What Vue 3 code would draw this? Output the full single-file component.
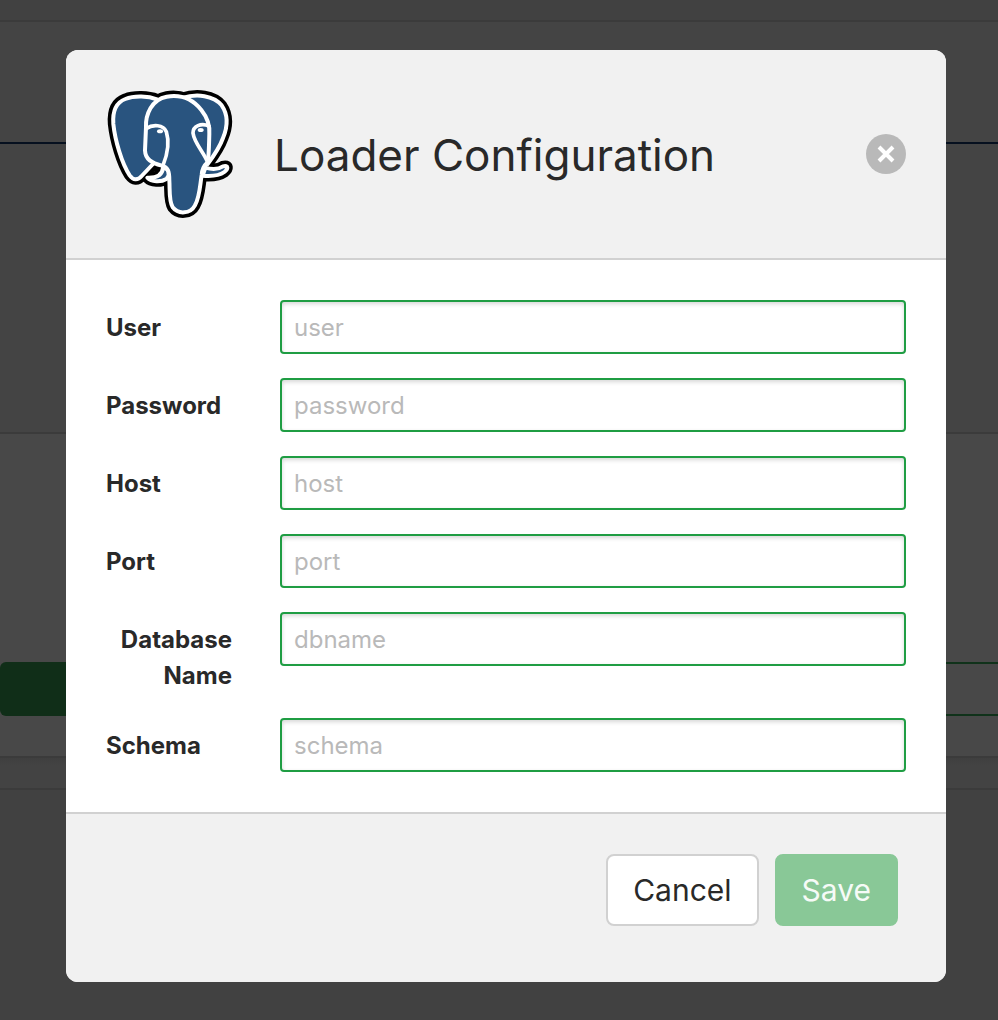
<script setup>
import { reactive } from 'vue'

const fields = [
  { id: 'user', label: 'User', type: 'text' },
  { id: 'password', label: 'Password', type: 'password' },
  { id: 'host', label: 'Host', type: 'text' },
  { id: 'port', label: 'Port', type: 'text' },
  { id: 'dbname', label: 'Database Name', type: 'text', wrap: true },
  { id: 'schema', label: 'Schema', type: 'text' },
]
const values = reactive({ user: '', password: '', host: '', port: '', dbname: '', schema: '' })
</script>

<template>
  <div class="screen">
    <div class="backdrop" aria-hidden="true">
      <div class="band topbar"></div>
      <div class="band tabs"></div>
      <div class="band content"></div>
      <div class="band panel">
        <div class="panel-action"></div>
        <div class="panel-field"></div>
      </div>
      <div class="band gap"></div>
      <div class="rest"></div>
    </div>

    <div class="overlay">
      <form class="modal" role="dialog" aria-labelledby="modal-title" @submit.prevent>
        <header class="modal-head">
          <svg class="logo" viewBox="33 30 384 384" role="img" aria-label="PostgreSQL">
            <defs>
              <g id="elephant">
                <path d="M186 58C160 48 118 46 91 57C62 68 52 92 55 132C60 180 80 250 104 286C115 301 128 302 140 288L174 252L250 190Z" />
                <path d="M262 54C305 40 356 46 380 76C402 108 396 145 384 174C373 205 356 228 338 252L290 180Z" />
                <path d="M157 293C179 294 202 288 204 263C222 262 227 286 214 297C198 307 169 306 157 293Z" />
                <path d="M331 263C352 269 372 267 384 259C401 254 400 267 388 276C370 289 346 289 323 287Z" />
                <path d="M153 142C151 104 170 58 215 50C257 43 294 58 319 90C338 114 345 137 343 162C342 193 342 224 338 247C324 259 321 270 320 285C314 324 314 352 300 376C286 402 250 404 233 382C221 362 225 330 223 301C223 276 220 261 200 257C170 249 151 238 150 211Z" />
              </g>
            </defs>
            <use href="#elephant" class="outline" />
            <use href="#elephant" class="body" />
            <path class="patch" d="M162 277Q174 258 193 264Q194 276 162 277Z" />
            <path class="line" d="M153 146C174 132 205 134 214 155C225 190 217 224 204 256" />
            <path class="line" d="M342 138C318 128 294 138 294 159C298 190 325 214 338 247" />
            <ellipse class="eye" cx="195" cy="154" rx="9" ry="6" />
            <ellipse class="eye" cx="317" cy="150" rx="9" ry="6" />
          </svg>
          <h1 id="modal-title">Loader Configuration</h1>
          <button type="button" class="close" aria-label="Close">
            <svg viewBox="0 0 40 40" aria-hidden="true">
              <path d="M13 13L27 27M27 13L13 27" />
            </svg>
          </button>
        </header>

        <div class="modal-body">
          <div v-for="f in fields" :key="f.id" class="field">
            <label :for="f.id" :class="{ wrap: f.wrap }">{{ f.label }}</label>
            <input :id="f.id" v-model="values[f.id]" :type="f.type" :placeholder="f.id" />
          </div>
        </div>

        <footer class="modal-foot">
          <button type="button" class="btn cancel">Cancel</button>
          <button type="submit" class="btn save" disabled>Save</button>
        </footer>
      </form>
    </div>
  </div>
</template>

<style>
body {
  margin: 0;
  background: #414141;
}
</style>

<style scoped>
.screen {
  display: grid;
  min-height: 100vh;
  font-family: Inter, "Liberation Sans", sans-serif;
  color: #292929;
}
.screen *,
.screen {
  box-sizing: border-box;
}
.backdrop,
.overlay {
  grid-area: 1 / 1;
}
.backdrop {
  display: flex;
  flex-direction: column;
}
.band {
  border-bottom: 2px solid #3b3b3b;
}
.topbar {
  height: 22px;
  background: #414141;
}
.tabs {
  height: 122px;
  background: #444;
  border-bottom-color: #06101f;
}
.content {
  height: 290px;
  background: #444;
}
.panel {
  display: flex;
  align-items: flex-end;
  height: 324px;
  padding-bottom: 40px;
  background: #484848;
}
.panel-action {
  width: 160px;
  height: 54px;
  background: #102e18;
  border-radius: 6px 0 0 6px;
}
.panel-field {
  flex: 1;
  height: 54px;
  border: 2px solid #10321a;
  border-right: 0;
}
.gap {
  height: 32px;
  background: linear-gradient(#3f3f3f, #434343 8px);
}
.rest {
  flex: 1;
  background: #414141;
}
.overlay {
  z-index: 1;
  padding: 50px 52px 38px 66px;
}
.modal {
  overflow: hidden;
  background: #fff;
  border-radius: 12px;
}
.modal-head {
  display: flex;
  align-items: center;
  padding: 40px;
  background: #f1f1f1;
  border-bottom: 2px solid #d1d1d1;
}
.logo {
  flex: none;
  width: 128px;
  height: 128px;
}
.outline {
  fill: #000;
  stroke: #000;
  stroke-width: 33;
  stroke-linejoin: round;
}
.body {
  fill: #29547f;
  stroke: #fff;
  stroke-width: 12;
  stroke-linejoin: round;
}
.patch {
  fill: #000;
}
.line {
  fill: none;
  stroke: #fff;
  stroke-width: 11;
  stroke-linecap: round;
}
.eye {
  fill: #fff;
}
h1 {
  flex: 1;
  margin: 0;
  padding: 2px 0 0 40px;
  font-size: 44px;
  font-weight: 400;
  line-height: 60px;
}
.close {
  width: 40px;
  height: 40px;
  padding: 0;
  background: #b9b9b9;
  border: 0;
  border-radius: 50%;
}
.close svg {
  display: block;
}
.close path {
  fill: none;
  stroke: #fff;
  stroke-width: 4;
}
.modal-body {
  display: grid;
  gap: 24px;
  padding: 40px;
}
.field {
  display: flex;
  align-items: flex-start;
  justify-content: space-between;
}
label {
  padding-top: 10px;
  font-size: 24px;
  font-weight: 700;
  line-height: 36px;
}
.wrap {
  width: 126px;
  text-align: right;
}
.field input {
  width: 626px;
  max-width: calc(100% - 174px);
  height: 54px;
  padding: 0 12px;
  font: 400 24px Inter, "Liberation Sans", sans-serif;
  color: #292929;
  background: #fff;
  border: 2px solid #1f9d43;
  border-radius: 4px;
  box-shadow: inset 0 2px 4px rgba(0, 0, 0, 0.16);
  outline: 0;
}
.field input::placeholder {
  color: #b9b9b9;
  opacity: 1;
}
.modal-foot {
  display: flex;
  justify-content: flex-end;
  gap: 16px;
  padding: 40px 48px 56px;
  background: #f1f1f1;
  border-top: 2px solid #d1d1d1;
}
.btn {
  height: 72px;
  padding: 0 25px;
  font: 400 30px Inter, "Liberation Sans", sans-serif;
  border: 2px solid #d1d1d1;
  border-radius: 8px;
}
.cancel {
  color: #292929;
  background: #fff;
}
.save {
  color: #f6fbf7;
  background: #89c897;
  border-color: #89c897;
}
</style>
